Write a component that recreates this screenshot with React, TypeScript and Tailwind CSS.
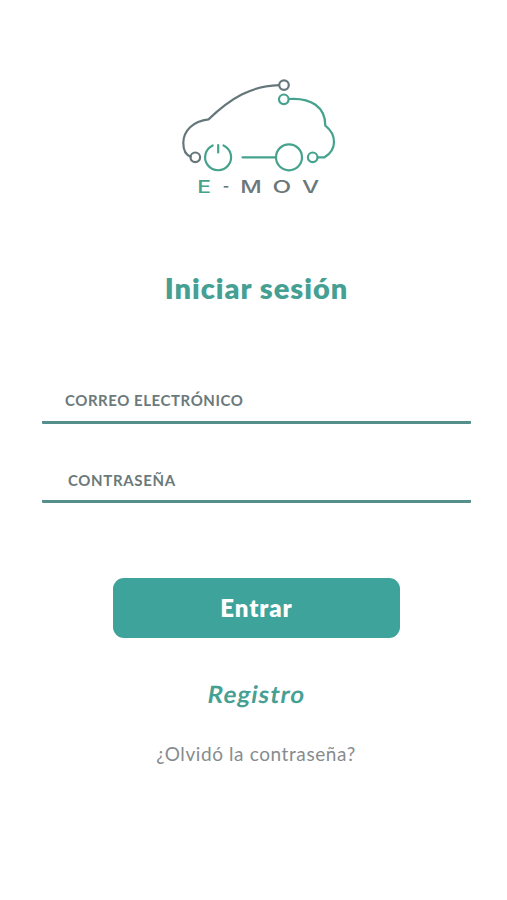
import { useState } from "react";

const glyphs = [
  { char: "E", x: 197.2, y: 193.3, length: 13.8, color: "#45a28d" },
  { char: "-", x: 222.8, y: 192.3, length: 6.5, color: "#6b7779" },
  { char: "M", x: 240.3, y: 193.3, length: 21.5, color: "#6b7779" },
  { char: "O", x: 272.5, y: 193.3, length: 18.7, color: "#6b7779" },
  { char: "V", x: 302, y: 193.3, length: 17.2, color: "#6b7779" },
];

function Logo() {
  return (
    <svg
      viewBox="176 74 164 124"
      className="h-[124px] w-[164px]"
      fill="none"
      strokeWidth="2.2"
      strokeLinecap="round"
      strokeLinejoin="round"
      role="img"
      aria-label="E-MOV"
    >
      {/* Carrocería */}
      <g stroke="#66777b">
        <path d="M279 85.2C251 86 231 98 208.5 119.4C193 121 183.3 131 183.3 143C183.3 150 186 155 190.6 156.6" />
        <circle cx="284" cy="85.1" r="4.8" />
        <circle cx="195.3" cy="157.3" r="4.8" />
      </g>
      <g stroke="#45a28d">
        <path d="M289 99C311 97.5 325.5 107 325.3 125.6C331 130 334 136 334 142C334 149 330 154 324.5 157.3H318" />
        <circle cx="283.8" cy="99.3" r="4.8" />
        <circle cx="312.7" cy="157.3" r="4.8" />
        {/* Ruedas */}
        <circle cx="289" cy="157.3" r="13" />
        <path d="M242.5 157.3H276" />
        <path d="M212.7 145.4A13 13 0 1 0 223.5 145.4M218.2 145V152.5" />
      </g>
      <g
        className="font-['Inter',sans-serif] text-[17px] font-medium"
        stroke="none"
      >
        {glyphs.map((g) => (
          <text
            key={g.char}
            x={g.x}
            y={g.y}
            textLength={g.length}
            lengthAdjust="spacingAndGlyphs"
            fill={g.color}
          >
            {g.char}
          </text>
        ))}
      </g>
    </svg>
  );
}

export default function App() {
  const [email, setEmail] = useState("");
  const [password, setPassword] = useState("");

  return (
    <main className="flex h-[900px] w-[507px] flex-col items-center bg-white font-['Lato',sans-serif]">
      <header className="mt-[74px] ml-[9px]">
        <Logo />
      </header>

      <h1 className="mt-[70px] ml-[6px] text-[29px] leading-[40px] font-extrabold tracking-[1px] text-[#45a093]">
        Iniciar sesión
      </h1>

      <form
        onSubmit={(e) => e.preventDefault()}
        className="mt-[77px] flex w-full flex-col items-center"
      >
        <input
          type="email"
          aria-label="Correo electrónico"
          placeholder="CORREO ELECTRÓNICO"
          value={email}
          onChange={(e) => setEmail(e.target.value)}
          className="ml-[6px] h-[39px] w-[429px] rounded-[1px] border-b-[3px] border-[#558f8b] pb-[6px] pl-[23px] text-[15px] font-bold tracking-[0.55px] text-[#6b797b] outline-none placeholder:text-[#6b797b]"
        />
        <input
          type="password"
          aria-label="Contraseña"
          placeholder="CONTRASEÑA"
          value={password}
          onChange={(e) => setPassword(e.target.value)}
          className="mt-[40px] ml-[6px] h-[39px] w-[429px] rounded-[1px] border-b-[3px] border-[#558f8b] pb-[5px] pl-[26px] text-[15px] font-bold tracking-[0.65px] text-[#6b797b] outline-none placeholder:text-[#6b797b]"
        />

        <button
          type="submit"
          className="mt-[75px] ml-[6px] h-[60px] w-[287px] rounded-[11px] bg-[#3ea39a] text-2xl font-extrabold tracking-[0.9px] text-white"
        >
          Entrar
        </button>
      </form>

      <a
        href="#registro"
        className="mt-[40px] ml-[6px] -skew-x-[9deg] text-2xl leading-8 font-bold tracking-[1.2px] text-[#45a093]"
      >
        Registro
      </a>
      <a
        href="#recuperar"
        className="mt-[30px] ml-[5px] text-[19px] leading-[28px] tracking-[0.6px] text-[#868c8e]"
      >
        ¿Olvidó la contraseña?
      </a>
    </main>
  );
}
